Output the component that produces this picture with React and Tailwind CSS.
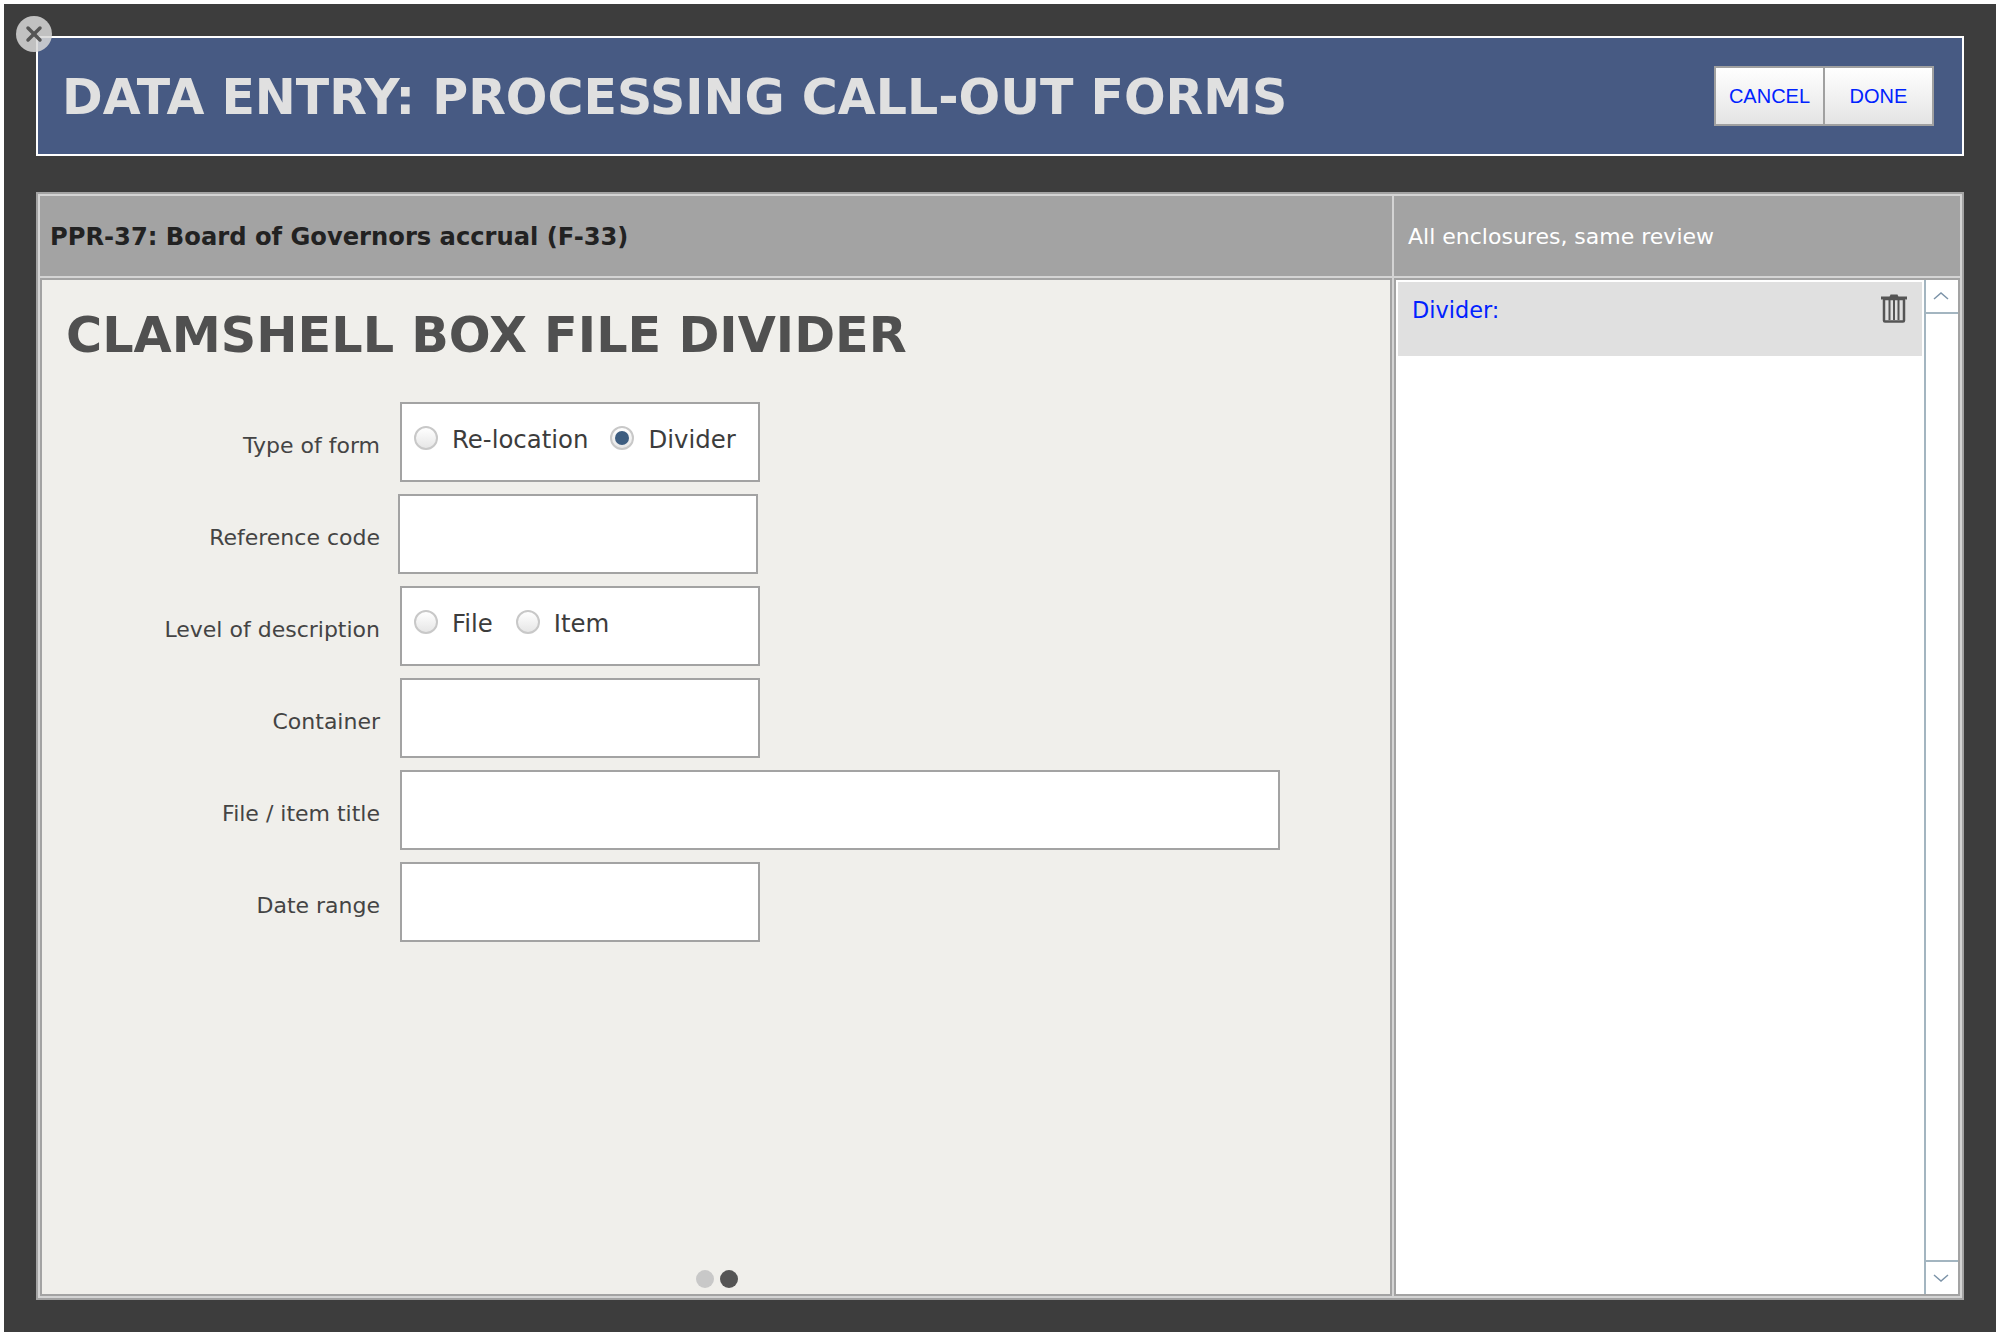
import { useState } from 'react';
import { X } from 'lucide-react';

const dejavu = "font-['DejaVu_Sans',sans-serif]";
const arial = "font-['Liberation_Sans',Arial,sans-serif]";

function Row({ label, wide, shift, children }) {
  return (
    <div className="flex h-[80px] items-start">
      <div className="w-[358px] pt-[28px] pr-[20px] text-right text-[22px] leading-[32px] text-[#444]">{label}</div>
      <div
        className={`h-[80px] border-2 border-[#a3a3a3] bg-white ${wide ? 'w-[880px]' : 'w-[360px]'} ${shift ? '-ml-[2px]' : ''}`}
      >
        {children}
      </div>
    </div>
  );
}

function Radio({ label, checked }) {
  return (
    <span className="flex items-center">
      <span className="flex h-[24px] w-[24px] items-center justify-center rounded-full border-2 border-[#c8c8c8] bg-gradient-to-b from-white to-[#e6e6e6]">
        {checked && <span className="h-[14px] w-[14px] rounded-full bg-[#3d5d80]" />}
      </span>
      <span className="mt-[4px] ml-[14px] text-[24.4px] leading-[32px] text-[#3c3c3c]">{label}</span>
    </span>
  );
}

function Trash() {
  return (
    <svg width="28" height="29" viewBox="0 0 28 29" fill="none" stroke="#555" strokeWidth="2">
      <path d="M9.5 3l1-2.5h7l1 2.5z" fill="#555" stroke="none" />
      <path d="M1 4h26" strokeWidth="3" />
      <rect x="4" y="5" width="20" height="22.5" rx="1" strokeWidth="2.5" />
      <path d="M9.5 6v20M14 6v20M18.5 6v20" />
    </svg>
  );
}

export default function App() {
  const [formType] = useState('divider');

  return (
    <div className={`h-[1336px] w-[2000px] bg-white p-[4px] ${dejavu}`}>
      <div className="relative flex h-[1328px] w-[1992px] flex-col bg-[#3d3d3d] px-[32px] pt-[32px]">
        {/* close button */}
        <button className="absolute top-[12px] left-[12px] z-10 flex h-[36px] w-[36px] items-center justify-center rounded-full bg-[#d8d8d8]/85 text-[#555]">
          <X size={24} strokeWidth={3.5} />
        </button>

        <header className="flex h-[120px] items-center justify-between border-2 border-white bg-[#475a83] pr-[28px] pl-[24px]">
          <h1 className="mt-[4px] text-[49px] font-bold text-[#e0e0e0]">DATA ENTRY: PROCESSING CALL-OUT FORMS</h1>
          <div className={`flex h-[60px] border-2 border-[#a0a0a0] bg-gradient-to-b from-white to-[#e4e4e4] text-[20px] text-[#0022ff] ${arial}`}>
            <button className="w-[109px] border-r-2 border-[#a0a0a0]">CANCEL</button>
            <button className="w-[107px]">DONE</button>
          </div>
        </header>

        <main className="mt-[36px] flex h-[1108px] flex-col border-2 border-[#a3a3a3] bg-[#d4d4d4] p-[2px]">
          <div className="flex h-[80px] bg-[#a3a3a3]">
            <div className="flex w-[1352px] items-center pt-[2px] pl-[10px] text-[24.2px] font-bold text-[#222]">
              PPR-37: Board of Governors accrual (F-33)
            </div>
            <div className="flex flex-1 items-center border-l-2 border-[#d4d4d4] pl-[14px] text-[22px] text-white">
              All enclosures, same review
            </div>
          </div>
          <div className="mt-[2px] flex min-h-0 flex-1">
            <section className="relative w-[1352px] border-2 border-[#a3a3a3] bg-[#f0efeb] pl-[24px]">
              <h2 className="mt-[27px] text-[49.3px] leading-[56px] font-bold text-[#505050]">CLAMSHELL BOX FILE DIVIDER</h2>
              <div className="-ml-[24px] mt-[39px] flex flex-col gap-[12px]">
                <Row label="Type of form">
                  <div className="flex gap-[22px] pt-[16px] pl-[12px]">
                    <Radio label="Re-location" />
                    <Radio label="Divider" checked={formType === 'divider'} />
                  </div>
                </Row>
                <Row label="Reference code" shift />
                <Row label="Level of description">
                  <div className="flex gap-[23px] pt-[16px] pl-[12px]">
                    <Radio label="File" />
                    <Radio label="Item" />
                  </div>
                </Row>
                <Row label="Container" />
                <Row label="File / item title" wide />
                <Row label="Date range" />
              </div>
              <div className="absolute bottom-[6px] left-0 flex w-full justify-center gap-[6px] pl-[2px]">
                <span className="h-[18px] w-[18px] rounded-full bg-[#c8c8c8]" />
                <span className="h-[18px] w-[18px] rounded-full bg-[#555]" />
              </div>
            </section>
            <aside className="ml-[2px] flex flex-1 border-2 border-[#a3a3a3] bg-white">
              <div className="flex-1 p-[2px]">
                <div className="flex h-[74px] items-start justify-between bg-[#e0e0e0] pt-[12px] pr-[14px] pl-[14px]">
                  <a className="pt-[2px] text-[22.4px] leading-[28px] text-[#0022ff]">Divider:</a>
                  <Trash />
                </div>
              </div>
              <div className="flex w-[34px] flex-col justify-between border-l-2 border-[#a3b5c0] bg-white">
                <div className="flex h-[34px] items-center justify-center border-b-2 border-[#a3b5c0] pr-[2px]">
                  <svg width="16" height="10" viewBox="0 0 16 10" fill="none" stroke="#7c93a8" strokeWidth="1.5"><path d="M1 8l7-6 7 6" /></svg>
                </div>
                <div className="flex h-[34px] items-center justify-center border-t-2 border-[#a3b5c0] pr-[2px]">
                  <svg width="16" height="10" viewBox="0 0 16 10" fill="none" stroke="#7c93a8" strokeWidth="1.5"><path d="M1 2l7 6 7-6" /></svg>
                </div>
              </div>
            </aside>
          </div>
        </main>
      </div>
    </div>
  );
}
